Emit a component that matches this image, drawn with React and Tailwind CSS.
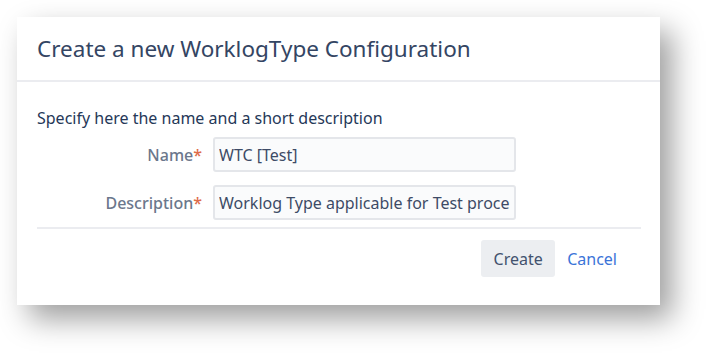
import React from "react";

const font = { fontFamily: '"Noto Sans", "Open Sans", sans-serif' };

const Field = ({ label, value }) => (
  <div className="flex items-center">
    <label className="w-[176px] pr-[11px] text-right text-[16px] font-medium text-[#6b778c]">
      {label}
      <span className="text-[#de6b4a]">*</span>
    </label>
    <input
      readOnly
      value={value}
      className="w-[303px] h-[35px] rounded-[3px] border-2 border-[#e4e6ea] bg-[#fafbfc] px-[4px] text-[16px] text-[#3d4b66] outline-none"
    />
  </div>
);

export default function App() {
  return (
    <div className="w-[708px] h-[354px] bg-white pt-[17px] pl-[17px]" style={font}>
      <div className="w-[643px] h-[288px] bg-white shadow-[12px_14px_28px_rgba(0,0,0,0.38)]">
        <div className="h-[65px] flex items-center px-5 border-b-2 border-[#ebecf0]">
          <h2 className="text-[22.5px] text-[#344563]">Create a new WorklogType Configuration</h2>
        </div>
        <div className="pl-5 pr-[19px] pt-[24px]">
          <p className="text-[16px] leading-6 text-[#253858]">Specify here the name and a short description</p>
          <div className="mt-[7px] flex flex-col gap-[13px]">
            <Field label="Name" value="WTC [Test]" />
            <Field label="Description" value="Worklog Type applicable for Test process" />
          </div>
          <div className="mt-[7px] border-t-2 border-[#ebecf0]" />
          <div className="mt-[11px] flex justify-end items-center pr-[24px] gap-3">
            <button className="h-[37px] w-[74px] rounded-[3px] bg-[#eceef1] text-[16px] text-[#42526e]">Create</button>
            <button className="text-[16px] text-[#3b74d8]">Cancel</button>
          </div>
        </div>
      </div>
    </div>
  );
}
